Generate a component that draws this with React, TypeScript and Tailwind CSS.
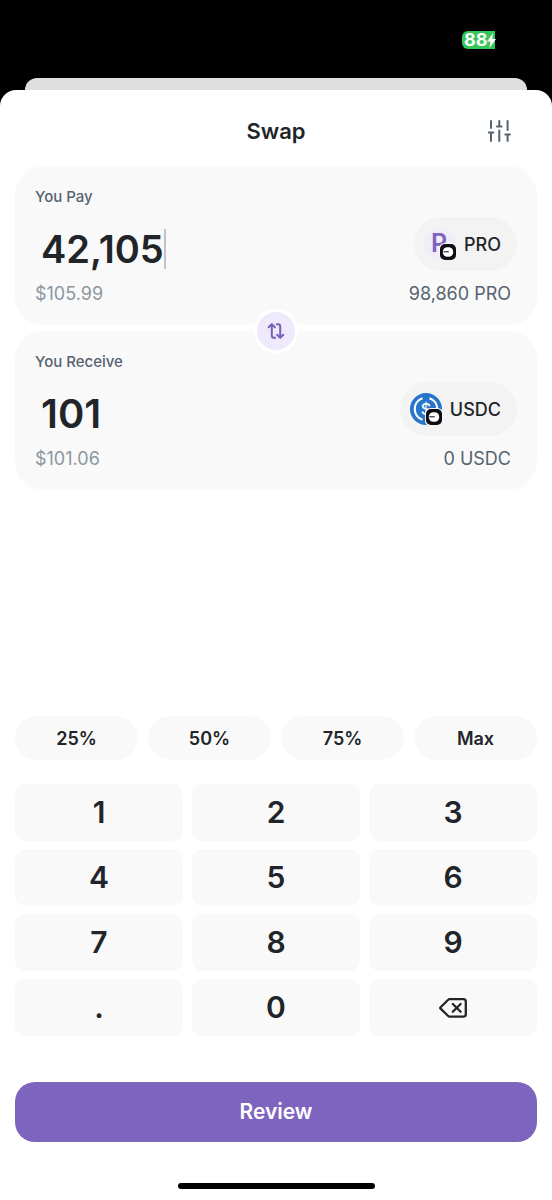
import React, { useState, type ReactNode } from "react";

/** Small chain badge that sits on the corner of a token logo */
function ChainBadge() {
  return (
    <svg
      viewBox="0 0 18 18"
      className="absolute -right-px -bottom-px size-[18px]"
      aria-hidden="true"
    >
      <rect width="18" height="18" rx="5.5" fill="#f6f5f7" />
      <rect x="1" y="1" width="16" height="16" rx="5" fill="#0c0c12" />
      <rect x="3.8" y="4.2" width="10.4" height="9.6" rx="4.6" fill="#fff" />
      <path d="M4.4 8.8h5.4" stroke="#0c0c12" strokeWidth="1" />
    </svg>
  );
}

function ProLogo() {
  return (
    <span className="relative size-8 shrink-0">
      <svg viewBox="0 0 32 32" className="size-8" aria-hidden="true">
        <circle cx="16" cy="16" r="16" fill="#f0edf8" />
        <text
          x="7"
          y="24"
          fontSize="25"
          fontWeight="600"
          fill="#7d64be"
          className="font-['Inter',sans-serif]"
        >
          P
        </text>
      </svg>
      <ChainBadge />
    </span>
  );
}

function UsdcLogo() {
  return (
    <span className="relative size-8 shrink-0">
      <svg viewBox="0 0 32 32" className="size-8" aria-hidden="true">
        <circle cx="16" cy="16" r="16" fill="#2775ca" />
        <g fill="none" stroke="#fff" strokeWidth="2.2">
          <path d="M12.5 5.2a11.4 11.4 0 0 0 0 21.6" />
          <path d="M19.5 5.2a11.4 11.4 0 0 1 0 21.6" />
        </g>
        <text
          x="16"
          y="21.6"
          textAnchor="middle"
          fontSize="16"
          fontWeight="500"
          fill="#fff"
          className="font-['Inter',sans-serif]"
        >
          $
        </text>
      </svg>
      <ChainBadge />
    </span>
  );
}

function SlidersIcon() {
  return (
    <svg
      viewBox="0 0 24 24"
      className="size-6"
      fill="none"
      stroke="currentColor"
      strokeWidth="2"
      strokeLinecap="round"
      aria-hidden="true"
    >
      <path d="M4 2v7M1.8 13.4h4.6M4 13.4V22" />
      <path d="M12.3 2v5.6M10 7.6h4.6M12.3 11.5V22" />
      <path d="M20.6 2v9M18.3 15.6h4.6M20.6 15.6V22" />
    </svg>
  );
}

function SwapIcon() {
  return (
    <svg
      viewBox="0 0 20 20"
      className="size-5"
      fill="none"
      stroke="currentColor"
      strokeWidth="2"
      strokeLinecap="round"
      strokeLinejoin="round"
      aria-hidden="true"
    >
      <path d="M2.7 6.2 5.8 3.1 8.9 6.2M5.8 3.4v11a2.4 2.4 0 0 0 2.4 2.4h1" />
      <path d="M11.1 13.8l3.1 3.1 3.1-3.1M14.2 16.6v-11a2.4 2.4 0 0 0-2.4-2.4h-1" />
    </svg>
  );
}

function BackspaceIcon() {
  return (
    <svg
      viewBox="0 0 28 20"
      className="h-5 w-7"
      fill="none"
      stroke="currentColor"
      strokeWidth="2.3"
      strokeLinecap="round"
      strokeLinejoin="round"
      aria-hidden="true"
    >
      <path d="M10.6 1.2H24.4a2.4 2.4 0 0 1 2.4 2.4v12.6a2.4 2.4 0 0 1-2.4 2.4H10.6a2 2 0 0 1-1.4-.6L1.6 10.6a1 1 0 0 1 0-1.4L9.2 1.8a2 2 0 0 1 1.4-.6z" />
      <path d="M13.8 6l7.8 7.8M21.6 6l-7.8 7.8" />
    </svg>
  );
}

/** Status bar, only the battery is visible */
function StatusBar() {
  return (
    <div className="flex h-[78px] items-center justify-end pt-[2px] pr-[57px]">
      <div className="flex h-[18px] w-[33px] items-center rounded-l-[6px] bg-[#34c759] pl-[2px]">
        <span className="text-[18px] leading-[18px] font-bold text-white">88</span>
        <svg viewBox="0 0 9 15" className="h-[15px] w-[9px] shrink-0" aria-hidden="true">
          <path d="M6 0 0 8.6h3.4L2.4 15 9 6H5.2z" fill="#fff" />
        </svg>
      </div>
    </div>
  );
}

type SwapCardProps = {
  id: string;
  label: string;
  amount: string;
  fiat: string;
  balance: string;
  token: string;
  logo: ReactNode;
  active?: boolean;
};

function SwapCard({ id, label, amount, fiat, balance, token, logo, active }: SwapCardProps) {
  // longer amounts get a slightly smaller size
  const size = amount.length > 5 ? "text-[38px]" : "text-[40px]";

  return (
    <section className="rounded-[28px] bg-[#f9f9f9] px-5 pt-[21px] pb-[19px]">
      <label htmlFor={id} className="block text-[15px] leading-5 font-medium text-[#566370]">
        {label}
      </label>
      <div className="mt-[10px] flex items-end justify-between">
        <div className="flex h-[44px] min-w-0 items-center pl-[6px]">
          <input
            id={id}
            value={amount}
            readOnly
            className={`field-sizing-content h-[44px] bg-transparent font-semibold text-[#212529] outline-none ${size}`}
          />
          {active && <span className="h-10 w-[2px] bg-[#c5c1cc]" />}
        </div>
        <button
          type="button"
          className="flex h-[54px] items-center gap-2 rounded-full bg-[#f3f3f4] pr-4 pl-[10px] text-[18px] font-medium text-[#212529]"
        >
          {logo}
          {token}
        </button>
      </div>
      <div className="mt-[11px] flex justify-between pr-[6px] text-[18px] leading-6">
        <span className="text-[#8b97a1]">{fiat}</span>
        <span className="text-[#566370]">{balance}</span>
      </div>
    </section>
  );
}

const shares = ["25%", "50%", "75%", "Max"];
const keys = ["1", "2", "3", "4", "5", "6", "7", "8", "9", ".", "0"];

export default function App() {
  const [pay, setPay] = useState<string>("42,105");

  function format(raw: string) {
    const [whole, rest] = raw.split(".");
    const grouped = whole.replace(/\B(?=(\d{3})+$)/g, ",");
    return rest === undefined ? grouped : grouped + "." + rest;
  }

  function press(key: string) {
    const raw = pay.replace(/,/g, "");
    if (key === "." && raw.includes(".")) return;
    setPay(format(raw + key));
  }

  function erase() {
    setPay(format(pay.replace(/,/g, "").slice(0, -1)));
  }

  return (
    <div className="flex min-h-screen flex-col bg-black font-['Inter',sans-serif] text-[#212529]">
      <StatusBar />
      <div className="mx-[25px] h-3 rounded-t-xl bg-[#dfdfdf]" />

      <main className="flex grow flex-col rounded-t-2xl bg-white px-[15px] pb-[11px]">
        <header className="grid h-[76px] grid-cols-[1fr_auto_1fr] items-center pt-[6px] pr-[26px]">
          <h1 className="col-start-2 pl-[26px] text-[22px] font-semibold">Swap</h1>
          <button type="button" aria-label="Settings" className="justify-self-end text-[#566370]">
            <SlidersIcon />
          </button>
        </header>

        <div className="relative flex flex-col gap-[6px]">
          <SwapCard
            id="pay"
            label="You Pay"
            amount={pay}
            fiat="$105.99"
            balance="98,860 PRO"
            token="PRO"
            logo={<ProLogo />}
            active
          />
          <SwapCard
            id="receive"
            label="You Receive"
            amount="101"
            fiat="$101.06"
            balance="0 USDC"
            token="USDC"
            logo={<UsdcLogo />}
          />
          <button
            type="button"
            aria-label="Switch tokens"
            className="absolute inset-x-0 top-[143px] mx-auto flex size-11 items-center justify-center rounded-full border-3 border-white bg-[#eee9fb] text-[#7860b8]"
          >
            <SwapIcon />
          </button>
        </div>

        <div className="mt-auto grid grid-cols-4 gap-[10px] pt-6">
          {shares.map((share) => (
            <button
              key={share}
              type="button"
              className="h-11 rounded-full bg-[#f9f9f9] text-[18px] font-semibold"
            >
              {share}
            </button>
          ))}
        </div>

        <div className="mt-6 grid grid-cols-3 gap-x-[9px] gap-y-2">
          {keys.map((key) => (
            <button
              key={key}
              type="button"
              onClick={() => press(key)}
              className="h-[57px] rounded-[10px] bg-[#f9f9f9] text-[30px] font-semibold"
            >
              {key}
            </button>
          ))}
          <button
            type="button"
            aria-label="Delete"
            onClick={erase}
            className="flex h-[57px] items-center justify-center rounded-[10px] bg-[#f9f9f9]"
          >
            <BackspaceIcon />
          </button>
        </div>

        <button
          type="button"
          className="mt-[46px] h-[60px] rounded-[20px] bg-[#7d64be] text-[21px] font-semibold text-white"
        >
          Review
        </button>

        <div className="mx-auto mt-[41px] h-[6px] w-[197px] rounded-full bg-black" />
      </main>
    </div>
  );
}
